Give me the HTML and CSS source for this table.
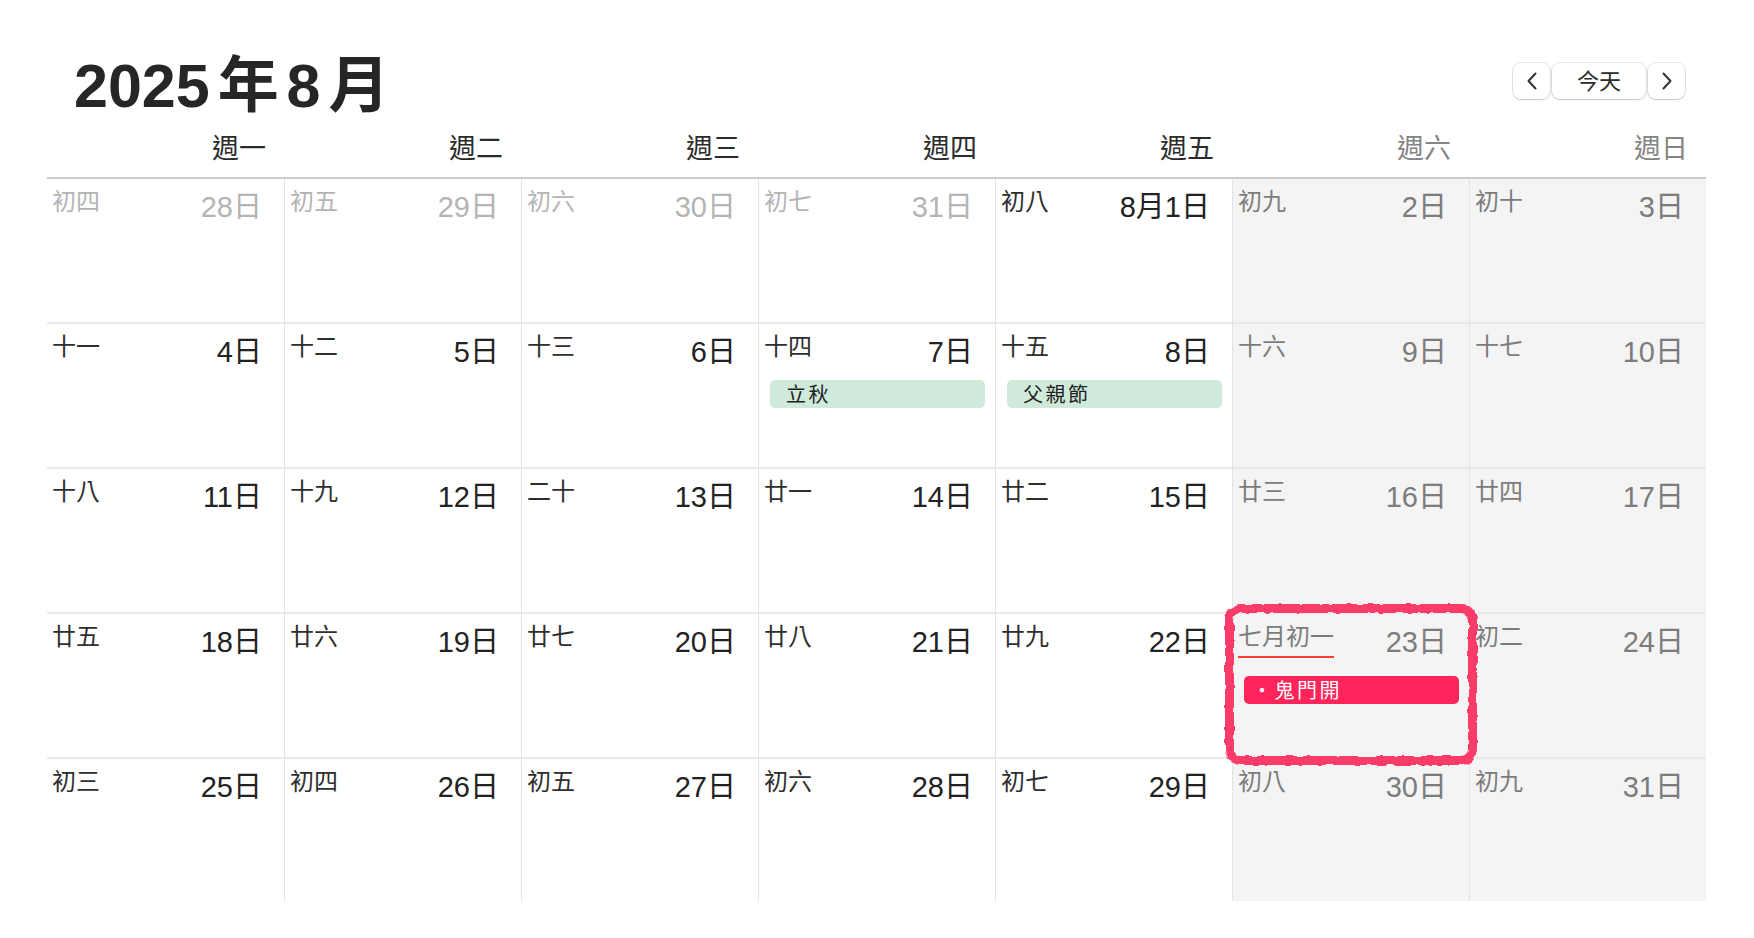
FILE: index.html
```html
<!DOCTYPE html>
<html lang="zh-Hant">
<head>
<meta charset="utf-8">
<title>2025年8月</title>
<link rel="stylesheet" href="styles.css">
</head>
<body>
<svg class="defs" width="0" height="0" aria-hidden="true">
  <filter id="rough" x="-5%" y="-5%" width="110%" height="110%">
    <feTurbulence type="fractalNoise" baseFrequency="0.1" numOctaves="2" seed="3" result="noise"/>
    <feDisplacementMap in="SourceGraphic" in2="noise" scale="5" xChannelSelector="R" yChannelSelector="G"/>
  </filter>
</svg>
<div class="cal">
  <header class="topbar">
    <h1 class="title">2025 年 8 月</h1>
    <div class="nav">
      <button class="btn btn-arrow" aria-label="上一個月">
        <svg width="12" height="18" viewBox="0 0 12 18"><path d="M9.5 1.5 L2.5 9 L9.5 16.5" fill="none" stroke="#333" stroke-width="2" stroke-linecap="round" stroke-linejoin="round"/></svg>
      </button>
      <button class="btn btn-today">今天</button>
      <button class="btn btn-arrow" aria-label="下一個月">
        <svg width="12" height="18" viewBox="0 0 12 18"><path d="M2.5 1.5 L9.5 9 L2.5 16.5" fill="none" stroke="#333" stroke-width="2" stroke-linecap="round" stroke-linejoin="round"/></svg>
      </button>
    </div>
  </header>

  <div class="weekdays">
    <div class="wd">週一</div>
    <div class="wd">週二</div>
    <div class="wd">週三</div>
    <div class="wd">週四</div>
    <div class="wd">週五</div>
    <div class="wd wd-end">週六</div>
    <div class="wd wd-end">週日</div>
  </div>

  <div class="grid">
    <!-- row 1 -->
    <div class="cell out"><div class="head"><span class="lunar">初四</span><span class="num">28日</span></div></div>
    <div class="cell out"><div class="head"><span class="lunar">初五</span><span class="num">29日</span></div></div>
    <div class="cell out"><div class="head"><span class="lunar">初六</span><span class="num">30日</span></div></div>
    <div class="cell out"><div class="head"><span class="lunar">初七</span><span class="num">31日</span></div></div>
    <div class="cell"><div class="head"><span class="lunar">初八</span><span class="num">8月1日</span></div></div>
    <div class="cell wkend"><div class="head"><span class="lunar">初九</span><span class="num">2日</span></div></div>
    <div class="cell wkend"><div class="head"><span class="lunar">初十</span><span class="num">3日</span></div></div>
    <!-- row 2 -->
    <div class="cell"><div class="head"><span class="lunar">十一</span><span class="num">4日</span></div></div>
    <div class="cell"><div class="head"><span class="lunar">十二</span><span class="num">5日</span></div></div>
    <div class="cell"><div class="head"><span class="lunar">十三</span><span class="num">6日</span></div></div>
    <div class="cell"><div class="head"><span class="lunar">十四</span><span class="num">7日</span></div><div class="chip chip-green">立秋</div></div>
    <div class="cell"><div class="head"><span class="lunar">十五</span><span class="num">8日</span></div><div class="chip chip-green">父親節</div></div>
    <div class="cell wkend"><div class="head"><span class="lunar">十六</span><span class="num">9日</span></div></div>
    <div class="cell wkend"><div class="head"><span class="lunar">十七</span><span class="num">10日</span></div></div>
    <!-- row 3 -->
    <div class="cell"><div class="head"><span class="lunar">十八</span><span class="num">11日</span></div></div>
    <div class="cell"><div class="head"><span class="lunar">十九</span><span class="num">12日</span></div></div>
    <div class="cell"><div class="head"><span class="lunar">二十</span><span class="num">13日</span></div></div>
    <div class="cell"><div class="head"><span class="lunar">廿一</span><span class="num">14日</span></div></div>
    <div class="cell"><div class="head"><span class="lunar">廿二</span><span class="num">15日</span></div></div>
    <div class="cell wkend"><div class="head"><span class="lunar">廿三</span><span class="num">16日</span></div></div>
    <div class="cell wkend"><div class="head"><span class="lunar">廿四</span><span class="num">17日</span></div></div>
    <!-- row 4 -->
    <div class="cell"><div class="head"><span class="lunar">廿五</span><span class="num">18日</span></div></div>
    <div class="cell"><div class="head"><span class="lunar">廿六</span><span class="num">19日</span></div></div>
    <div class="cell"><div class="head"><span class="lunar">廿七</span><span class="num">20日</span></div></div>
    <div class="cell"><div class="head"><span class="lunar">廿八</span><span class="num">21日</span></div></div>
    <div class="cell"><div class="head"><span class="lunar">廿九</span><span class="num">22日</span></div></div>
    <div class="cell wkend marked"><div class="head"><span class="lunar lunar-new">七月初一</span><span class="num">23日</span></div><div class="chip chip-red">・鬼門開</div><div class="annot" aria-hidden="true"></div></div>
    <div class="cell wkend"><div class="head"><span class="lunar">初二</span><span class="num">24日</span></div></div>
    <!-- row 5 -->
    <div class="cell last"><div class="head"><span class="lunar">初三</span><span class="num">25日</span></div></div>
    <div class="cell last"><div class="head"><span class="lunar">初四</span><span class="num">26日</span></div></div>
    <div class="cell last"><div class="head"><span class="lunar">初五</span><span class="num">27日</span></div></div>
    <div class="cell last"><div class="head"><span class="lunar">初六</span><span class="num">28日</span></div></div>
    <div class="cell last"><div class="head"><span class="lunar">初七</span><span class="num">29日</span></div></div>
    <div class="cell last wkend"><div class="head"><span class="lunar">初八</span><span class="num">30日</span></div></div>
    <div class="cell last wkend"><div class="head"><span class="lunar">初九</span><span class="num">31日</span></div></div>
  </div>
</div>
</body>
</html>
```

FILE: styles.css
```css
* { box-sizing: border-box; }

html, body {
  margin: 0;
  padding: 0;
  background: #ffffff;
}

body {
  font-family: "Liberation Sans", "Noto Sans CJK TC", sans-serif;
  color: #222222;
}

.defs {
  position: absolute;
  width: 0;
  height: 0;
  overflow: hidden;
}

.cal {
  width: 1659px;
  margin: 0 0 0 47px;
  padding-top: 50px;
}

/* ---------- top bar ---------- */
.topbar {
  display: flex;
  justify-content: space-between;
  align-items: flex-start;
  padding: 0 21px 0 27px;
  height: 72px;
}

.title {
  margin: 0;
  font-family: "Liberation Sans", "Noto Sans CJK TC", sans-serif;
  font-size: 61px;
  font-weight: 700;
  line-height: 72px;
  color: #262626;
  word-spacing: -9px;
}

.nav {
  display: flex;
  gap: 2px;
  margin-top: 13px;
}

.btn {
  height: 36px;
  border: none;
  background: #ffffff;
  border-radius: 8px;
  box-shadow: 0 0 0 1px rgba(0, 0, 0, 0.09), 0 1px 2px rgba(0, 0, 0, 0.14);
  display: flex;
  align-items: center;
  justify-content: center;
  padding: 0;
  color: #2a2a2a;
  font-family: "Noto Sans CJK TC", sans-serif;
}

.btn-arrow { width: 37px; }

.btn-today {
  width: 94px;
  font-size: 22px;
  line-height: 28px;
  padding-bottom: 5px;
}

/* ---------- weekday header ---------- */
.weekdays {
  display: grid;
  grid-template-columns: repeat(7, 1fr);
  padding: 7px 0 12px;
}

.wd {
  font-family: "Noto Sans CJK TC", sans-serif;
  font-size: 27px;
  line-height: 36px;
  text-align: right;
  padding-right: 18px;
  color: #2b2b2b;
}

.wd-end { color: #858585; }

/* ---------- grid ---------- */
.grid {
  display: grid;
  grid-template-columns: repeat(7, 1fr);
  grid-template-rows: repeat(4, 145px) 142px;
  border-top: 2px solid #cbcbcf;
}

.cell {
  border-left: 1px solid #e2e2e2;
  border-bottom: 2px solid #e9e9e9;
  padding: 6px 22px 0 5px;
  background: #ffffff;
}

.cell:nth-child(7n+1) { border-left: none; }

.cell.last { border-bottom: none; }

.cell.wkend { background: #f4f4f4; }

.head {
  display: flex;
  justify-content: space-between;
  align-items: flex-start;
}

.lunar {
  font-family: "Noto Sans CJK TC", sans-serif;
  font-size: 24px;
  line-height: 30px;
  color: #2e2e2e;
}

.num {
  font-size: 29px;
  line-height: 34px;
  margin-top: 5px;
  color: #222222;
}

.cell.out .lunar,
.cell.out .num { color: #b4b4b4; }

.cell.wkend .lunar,
.cell.wkend .num { color: #7c7c7c; }

/* ---------- events ---------- */
.chip {
  height: 28px;
  margin: 11px -12px 0 6px;
  border-radius: 5px;
  padding-left: 16px;
  font-family: "Noto Sans CJK TC", sans-serif;
  font-size: 20px;
  line-height: 28px;
  letter-spacing: 2.5px;
}

.chip-green {
  background: #cfe9db;
  color: #1e1e1e;
}

.chip-red {
  background: #ff2459;
  color: #ffffff;
  padding-left: 8px;
  margin-top: 17px;
}

/* ---------- annotated cell ---------- */
.marked { position: relative; }

.lunar-new {
  display: inline-block;
  padding-bottom: 6px;
  border-bottom: 2px solid #ff3b30;
  color: #7c7c7c;
}

.annot {
  position: absolute;
  top: -10px;
  left: -8px;
  right: -8px;
  bottom: -8px;
  border: 9px solid #fb3a6b;
  border-radius: 16px;
  filter: url(#rough);
  pointer-events: none;
}
```
